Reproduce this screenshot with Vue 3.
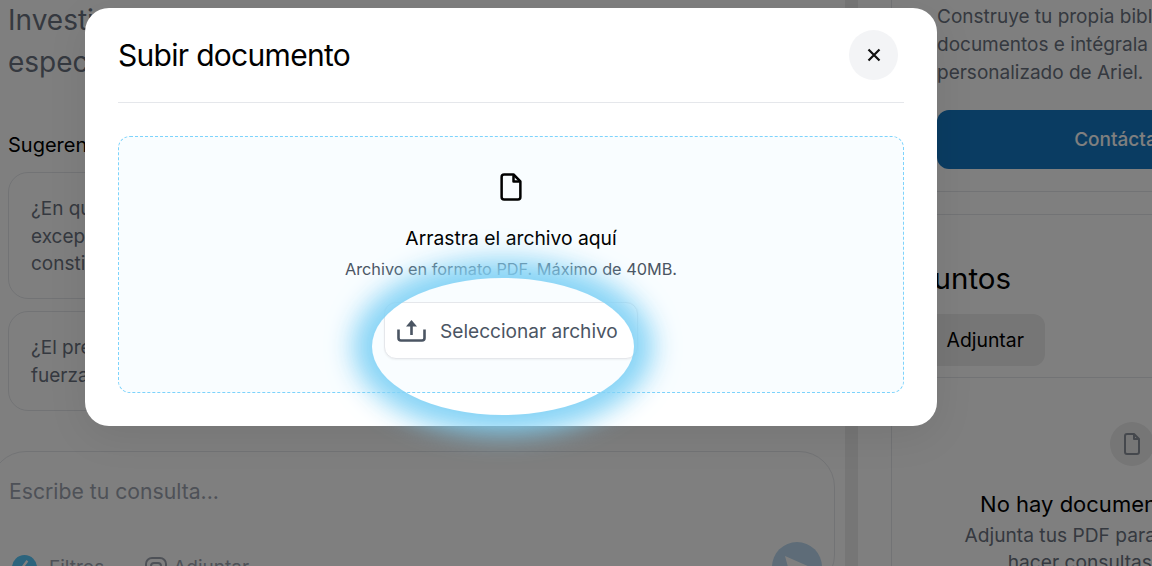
<template>
  <div class="page">
    <main class="main">
      <p class="intro">Investiga sobre tus casos y encuentra información<br>especializada en segundos con ayuda de Ariel.</p>
      <h3 class="suggest-title">Sugerencias para empezar</h3>
      <div class="suggest-card suggest-tall">¿En qué casos procede la aplicación de la<br>excepción de inconstitucionalidad frente a actos<br>constitutivos de derechos?</div>
      <div class="suggest-card">¿El precedente judicial tiene<br>fuerza vinculante?</div>
      <div class="composer">
        <div class="composer-input">Escribe tu consulta...</div>
        <div class="composer-tools">
          <span class="tool">
            <svg width="25" height="25" viewBox="0 0 26 26">
              <circle cx="13" cy="13" r="13" fill="#58c8fa" />
              <path d="M16 6l-6 8h4l-4 6" fill="none" stroke="#fff" stroke-width="2.4" />
            </svg>
            Filtros
          </span>
          <span class="tool tool-attach">
            <svg width="24" height="24" viewBox="0 0 24 24" fill="none" stroke="#9ca3af" stroke-width="2">
              <rect x="2" y="3" width="20" height="20" rx="6" />
              <rect x="7" y="8" width="10" height="10" rx="3" />
            </svg>
            Adjuntar
          </span>
          <span class="send">
            <svg width="30" height="30" viewBox="0 0 30 30"><path d="M3 4l25 11L3 26l3-11z" fill="#fff" /></svg>
          </span>
        </div>
      </div>
    </main>
    <div class="band"></div>
    <aside class="side">
      <div class="side-inner">
        <p class="side-text">Construye tu propia biblioteca de<br>documentos e intégrala al asistente<br>personalizado de Ariel.</p>
        <button class="contact">Contáctanos</button>
      </div>
      <div class="side-rule first"></div>
      <div class="side-rule second"></div>
      <div class="side-inner">
        <h2 class="side-title">Adjuntos</h2>
        <button class="attach">Adjuntar</button>
      </div>
      <div class="side-rule third"></div>
      <div class="empty">
        <span class="empty-icon">
          <svg width="24" height="24" viewBox="0 0 24 24" fill="none" stroke="#8a909a" stroke-width="2" stroke-linejoin="round">
            <path d="M5 4a2 2 0 0 1 2-2h7l5 5v13a2 2 0 0 1-2 2H7a2 2 0 0 1-2-2z" />
            <path d="M14 2v5h5" />
          </svg>
        </span>
        <h4 class="empty-title">No hay documentos adjuntos</h4>
        <p class="empty-text">Adjunta tus PDF para poder empezar<br>hacer consultas sobre ellos</p>
      </div>
    </aside>
    <div class="overlay"></div>
    <section class="modal">
      <header class="modal-head">
        <h2 class="modal-title">Subir documento</h2>
        <button class="close">
          <svg width="14" height="14" viewBox="0 0 14 14" fill="none" stroke="#111" stroke-width="2.2">
            <path d="M1.5 1.5l11 11M12.5 1.5l-11 11" />
          </svg>
        </button>
      </header>
      <div class="drop">
        <svg class="drop-icon" width="30" height="30" viewBox="0 0 24 24" fill="none" stroke="#000" stroke-width="2" stroke-linejoin="round">
          <path d="M4.5 4a2 2 0 0 1 2-2h7.5l5.5 5.5V20a2 2 0 0 1-2 2h-11a2 2 0 0 1-2-2z" />
          <path d="M14 2.5v5h5" />
        </svg>
        <p class="drop-title">Arrastra el archivo aquí</p>
        <p class="drop-note">Archivo en formato PDF. Máximo de 40MB.</p>
        <button class="pick">
          <svg width="29" height="22" viewBox="0 0 29 22" fill="none" stroke="#4b5563" stroke-width="2.6">
            <path d="M1.5 9.5V18a2.5 2.5 0 0 0 2.5 2.5h21a2.5 2.5 0 0 0 2.5-2.5V9.5" />
            <path d="M14.5 15V4" />
            <path d="M14.5 0L20 6.5H9z" fill="#4b5563" stroke="none" />
          </svg>
          Seleccionar archivo
        </button>
      </div>
    </section>
    <div class="spot"></div>
  </div>
</template>

<script setup>
</script>

<style>
html,
body {
  margin: 0;
  overflow: hidden;
}
</style>

<style scoped>
.page {
  position: relative;
  display: flex;
  width: 1152px;
  height: 566px;
  overflow: hidden;
  background: #fff;
  font-family: Inter, "Liberation Sans", sans-serif;
  color: #000;
}

p,
h2,
h3,
h4 {
  margin: 0;
  font-weight: 400;
}

button {
  font-family: inherit;
  border: none;
  cursor: pointer;
}

.main {
  flex: 0 0 845px;
  box-sizing: border-box;
  padding: 0 10px 0 8px;
}

.intro {
  font-size: 28px;
  line-height: 41.5px;
  color: #6b7280;
  white-space: nowrap;
}

.suggest-title {
  margin-top: 47px;
  font-size: 20px;
  line-height: 30px;
}

.suggest-card {
  box-sizing: border-box;
  height: 100px;
  margin-top: 12px;
  padding: 22px;
  border: 1px solid #e5e7eb;
  border-radius: 20px;
  font-size: 19px;
  line-height: 27.5px;
  color: #6b7280;
}

.suggest-tall {
  height: 127px;
  margin-top: 12px;
}

.composer {
  box-sizing: border-box;
  height: 140px;
  margin: 40px 0 0 -18px;
  padding: 23px 12px 0 18px;
  border: 1px solid #e5e7eb;
  border-radius: 36px;
}

.composer-input {
  font-size: 21.2px;
  line-height: 32px;
  color: #9ca3af;
}

.composer-tools {
  display: flex;
  align-items: center;
  gap: 40px;
  margin-top: 35px;
  padding-left: 3px;
}

.tool {
  display: flex;
  align-items: center;
  gap: 12px;
  font-size: 19px;
  color: #9ca3af;
}

.tool-attach {
  gap: 5px;
}

.send {
  display: flex;
  align-items: center;
  justify-content: center;
  width: 50px;
  height: 50px;
  margin-left: auto;
  border-radius: 50%;
  background: #bcd9f0;
}

.band {
  flex: 0 0 13px;
  background: #ececec;
}

.side {
  flex: 0 0 470px;
  box-sizing: border-box;
  margin-left: 33px;
  border-left: 1px solid #e5e7eb;
}

.side-inner {
  padding-left: 45px;
}

.side-text {
  padding-top: 3px;
  font-size: 19px;
  line-height: 28px;
  color: #6b7280;
  white-space: nowrap;
}

.contact {
  display: block;
  width: 390px;
  height: 59px;
  margin-top: 23px;
  border-radius: 12px;
  background: #1478c4;
  font-size: 19px;
  font-weight: 500;
  color: #fff;
}

.side-rule {
  height: 1px;
  background: #e5e7eb;
}

.side-rule.first {
  margin-top: 22px;
}

.side-rule.second {
  margin-top: 22px;
}

.side-title {
  margin-top: 45px;
  margin-left: -49px;
  font-size: 29.5px;
  line-height: 36px;
  white-space: nowrap;
}

.attach {
  display: block;
  width: 150px;
  height: 52px;
  margin: 18px 0 0 -42px;
  padding-right: 21px;
  border-radius: 12px;
  background: #ececec;
  font-size: 19.4px;
  font-weight: 400;
  color: #000;
  text-align: right;
}

.side-rule.third {
  margin-top: 11px;
}

.empty {
  display: flex;
  flex-direction: column;
  align-items: center;
  width: 480px;
  padding-top: 44px;
}

.empty-icon {
  display: flex;
  align-items: center;
  justify-content: center;
  width: 44px;
  height: 44px;
  border-radius: 50%;
  background: #ececec;
}

.empty-title {
  margin-top: 23px;
  font-size: 22px;
  line-height: 30px;
  white-space: nowrap;
}

.empty-text {
  margin-top: 3px;
  font-size: 19.2px;
  line-height: 27px;
  color: #6b7280;
  text-align: center;
  white-space: nowrap;
}

.overlay {
  position: absolute;
  inset: 0;
  background: rgba(0, 0, 0, 0.5);
}

.modal {
  position: absolute;
  left: 85px;
  top: 8px;
  box-sizing: border-box;
  width: 852px;
  height: 418px;
  padding: 22px 33px 33px;
  border-radius: 24px;
  background: #fff;
  box-shadow: 0 10px 40px rgba(0, 0, 0, 0.08);
}

.modal-head {
  display: flex;
  align-items: center;
  justify-content: space-between;
  box-sizing: border-box;
  height: 73px;
  padding: 0 6px 22px 0;
  border-bottom: 1px solid #e5e7eb;
}

.modal-title {
  font-size: 30px;
  line-height: 50px;
  letter-spacing: -0.7px;
}

.close {
  display: flex;
  align-items: center;
  justify-content: center;
  width: 49px;
  height: 50px;
  padding: 0;
  border-radius: 50%;
  background: #f3f4f6;
}

.drop {
  display: flex;
  flex-direction: column;
  align-items: center;
  box-sizing: border-box;
  height: 257px;
  margin-top: 33px;
  padding-top: 35px;
  border: 1px dashed #7dd3fc;
  border-radius: 12px;
  background: #f9fdff;
}

.drop-title {
  margin-top: 22px;
  font-size: 19.3px;
  line-height: 28px;
  color: #000;
}

.drop-note {
  margin-top: 6px;
  font-size: 16.3px;
  line-height: 22px;
  color: #4b5563;
}

.pick {
  display: flex;
  align-items: center;
  gap: 14px;
  box-sizing: border-box;
  width: 254px;
  height: 57px;
  margin-top: 22px;
  padding: 0 12px;
  border: 1px solid #e5e7eb;
  border-radius: 12px;
  background: #fff;
  font-size: 19.1px;
  font-weight: 400;
  color: #4b5563;
  box-shadow: 0 1px 2px rgba(0, 0, 0, 0.05);
}

.spot {
  position: absolute;
  left: 372px;
  top: 278px;
  width: 262px;
  height: 137px;
  border-radius: 50%;
  box-shadow: 0 0 26px 19px rgba(130, 210, 245, 0.95);
}
</style>
